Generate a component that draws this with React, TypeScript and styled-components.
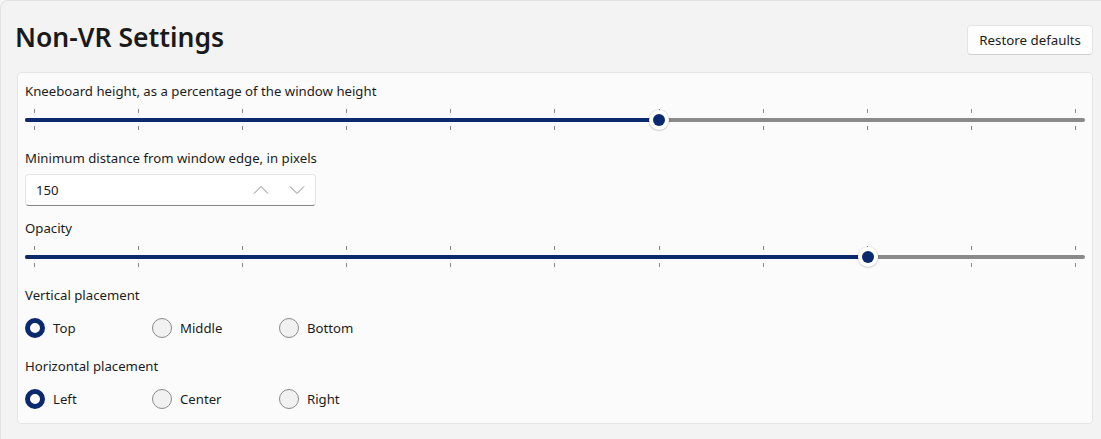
import React from "react";
import styled, { createGlobalStyle } from "styled-components";

const ACCENT = "#0b2a6e";

const GlobalStyle = createGlobalStyle`
  html, body {
    margin: 0;
    padding: 0;
    background: #f7f7f7;
  }
  body {
    font-family: "Noto Sans", "Open Sans", sans-serif;
    color: #1b1b1b;
  }
  * { box-sizing: border-box; }
`;

const Frame = styled.div`
  width: 1101px;
  height: 439px;
  background: #f3f3f3;
  border-top: 1px solid #e2e2e2;
  border-left: 1px solid #e2e2e2;
  border-top-left-radius: 8px;
  padding: 0 8px 0 16px;
  overflow: hidden;
`;

const Header = styled.div`
  display: flex;
  align-items: flex-start;
  justify-content: space-between;
  height: 71px;
`;

const Title = styled.h1`
  margin: 19px 0 0 -2px;
  font-size: 26.5px;
  font-weight: 600;
  line-height: 34px;
  color: #1a1a1a;
`;

const Button = styled.button`
  margin-top: 24px;
  height: 30px;
  padding: 0 11px;
  font-family: inherit;
  font-size: 13.3px;
  color: #1b1b1b;
  background: #fdfdfd;
  border: 1px solid #e5e5e5;
  border-bottom-color: #d0d0d0;
  border-radius: 4px;
`;

const Card = styled.div`
  background: #fbfbfb;
  border: 1px solid #e5e5e5;
  border-radius: 4px;
  padding: 8px 7px 8px 7px;
  display: flex;
  flex-direction: column;
  gap: 12px;
`;

const Setting = styled.div<{ $gap: number }>`
  display: flex;
  flex-direction: column;
  gap: ${(p) => p.$gap}px;
`;

const Label = styled.div`
  font-size: 13.2px;
  line-height: 20px;
  color: #1b1b1b;
`;

/* Slider */
const SliderRoot = styled.div`
  position: relative;
  height: 32px;
  display: flex;
  align-items: center;
`;

const Track = styled.div`
  flex: 1;
  height: 4px;
  border-radius: 2px;
  background: #8a8a8a;
  display: flex;
`;

const TrackFill = styled.div`
  height: 4px;
  border-radius: 2px;
  background: ${ACCENT};
`;

const TickRow = styled.div<{ $top: number }>`
  position: absolute;
  left: 9px;
  right: 9px;
  top: ${(p) => p.$top}px;
  display: flex;
  justify-content: space-between;
  pointer-events: none;
`;

const Tick = styled.div`
  width: 1px;
  height: 4px;
  background: #8a8a8a;
`;

const ThumbLane = styled.div`
  position: absolute;
  left: 9px;
  right: 9px;
  top: 0;
  bottom: 0;
`;

const Thumb = styled.div`
  position: absolute;
  top: 50%;
  width: 20px;
  height: 20px;
  margin: -10px 0 0 -10px;
  border-radius: 50%;
  background: #ffffff;
  box-shadow: 0 0 0 1px rgba(0, 0, 0, 0.06), 0 1px 2px rgba(0, 0, 0, 0.12);
  display: flex;
  align-items: center;
  justify-content: center;
  &::after {
    content: "";
    width: 12px;
    height: 12px;
    border-radius: 50%;
    background: ${ACCENT};
  }
`;

const Slider: React.FC<{ value: number }> = ({ value }) => {
  const ticks = Array.from({ length: 11 });
  return (
    <SliderRoot>
      <Track>
        <TrackFill style={{ width: `calc(9px + (100% - 18px) * ${value})` }} />
      </Track>
      <TickRow $top={5}>
        {ticks.map((_, i) => (
          <Tick key={i} />
        ))}
      </TickRow>
      <TickRow $top={22}>
        {ticks.map((_, i) => (
          <Tick key={i} />
        ))}
      </TickRow>
      <ThumbLane>
        <Thumb style={{ left: `${value * 100}%` }} />
      </ThumbLane>
    </SliderRoot>
  );
};

/* Number box */
const NumberBox = styled.div`
  width: 291px;
  height: 32px;
  display: flex;
  align-items: center;
  background: #ffffff;
  border: 1px solid #e5e5e5;
  border-bottom-color: #868686;
  border-radius: 4px;
  padding-left: 10px;
`;

const NumberValue = styled.span`
  flex: 1;
  font-size: 13.2px;
  color: #1b1b1b;
`;

const SpinButton = styled.span`
  width: 36px;
  height: 30px;
  display: flex;
  align-items: center;
  justify-content: center;
  color: #8a8a8a;
`;

const Chevron: React.FC<{ up?: boolean }> = ({ up }) => (
  <svg width="16" height="10" viewBox="0 0 16 10" fill="none">
    <path
      d={up ? "M1 8.5 L8 1.5 L15 8.5" : "M1 1.5 L8 8.5 L15 1.5"}
      stroke="currentColor"
      strokeWidth="1"
    />
  </svg>
);

/* Radios */
const RadioRow = styled.div`
  display: grid;
  grid-template-columns: repeat(3, 127px);
  height: 32px;
  align-items: center;
`;

const RadioOption = styled.label`
  display: flex;
  align-items: center;
  gap: 8px;
  font-size: 13.2px;
  color: #1b1b1b;
`;

const RadioCircle = styled.span<{ $checked: boolean }>`
  width: 20px;
  height: 20px;
  border-radius: 50%;
  flex: none;
  background: ${(p) => (p.$checked ? "#ffffff" : "#f1f1f1")};
  border: ${(p) => (p.$checked ? `5px solid ${ACCENT}` : "1px solid #8a8a8a")};
`;

const RadioGroup: React.FC<{ options: string[]; selected: number }> = ({
  options,
  selected,
}) => (
  <RadioRow>
    {options.map((o, i) => (
      <RadioOption key={o}>
        <RadioCircle $checked={i === selected} />
        {o}
      </RadioOption>
    ))}
  </RadioRow>
);

export default function App() {
  return (
    <>
      <GlobalStyle />
      <Frame>
        <Header>
          <Title>Non-VR Settings</Title>
          <Button>Restore defaults</Button>
        </Header>
        <Card>
          <Setting $gap={3}>
            <Label>Kneeboard height, as a percentage of the window height</Label>
            <Slider value={0.6} />
          </Setting>
          <Setting $gap={6}>
            <Label>Minimum distance from window edge, in pixels</Label>
            <NumberBox>
              <NumberValue>150</NumberValue>
              <SpinButton>
                <Chevron up />
              </SpinButton>
              <SpinButton>
                <Chevron />
              </SpinButton>
            </NumberBox>
          </Setting>
          <Setting $gap={3}>
            <Label>Opacity</Label>
            <Slider value={0.8} />
          </Setting>
          <Setting $gap={7}>
            <Label>Vertical placement</Label>
            <RadioGroup options={["Top", "Middle", "Bottom"]} selected={0} />
          </Setting>
          <Setting $gap={7}>
            <Label>Horizontal placement</Label>
            <RadioGroup options={["Left", "Center", "Right"]} selected={0} />
          </Setting>
        </Card>
      </Frame>
    </>
  );
}
